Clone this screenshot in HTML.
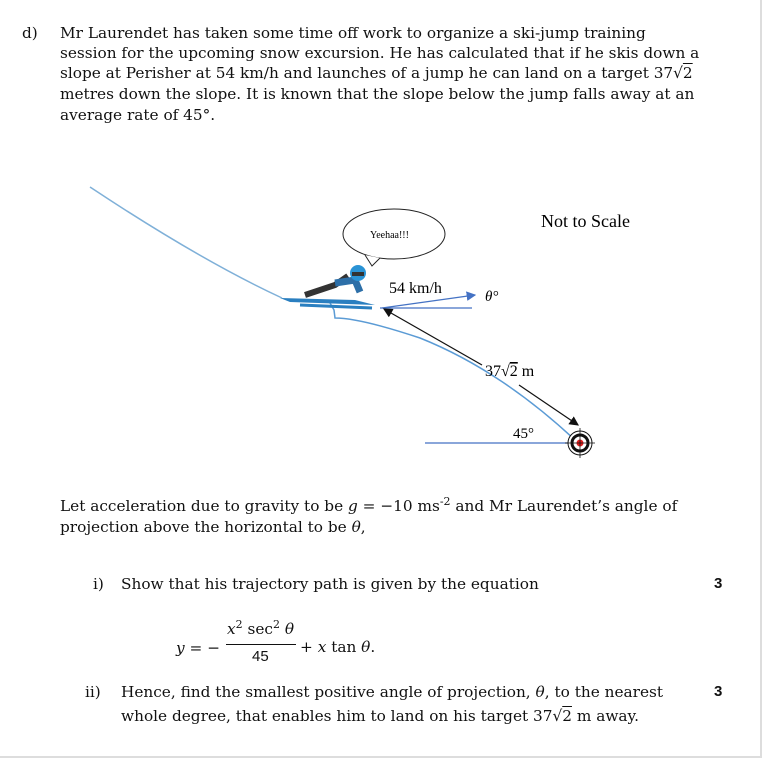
<!DOCTYPE html>
<html><head><meta charset="utf-8"><style>
body{margin:0;width:762px;height:758px;background:#fff;position:relative;overflow:hidden;font-family:"DejaVu Serif",serif;color:#111}
.t{position:absolute;white-space:nowrap;font-size:15.3px;line-height:20px;font-family:"DejaVu Serif",serif}
.m{font-style:italic}
sup{line-height:0}
.b{position:absolute;font-family:"Liberation Sans",sans-serif;font-weight:bold;font-size:15px}
</style></head><body>
<div style="position:absolute;right:0;top:0;width:2px;height:758px;background:#ddd"></div>
<div style="position:absolute;left:0;bottom:0;width:762px;height:2px;background:#ddd"></div>
<div class="t" style="left:22px;top:23px">d)</div>
<div class="t" style="left:60px;top:23px">Mr Laurendet has taken some time off work to organize a ski-jump training</div>
<div class="t" style="left:60px;top:43px">session for the upcoming snow excursion. He has calculated that if he skis down a</div>
<div class="t" style="left:60px;top:63px">slope at Perisher at 54 km/h and launches of a jump he can land on a target 37√<span style="text-decoration:overline">2</span></div>
<div class="t" style="left:60px;top:84px">metres down the slope. It is known that the slope below the jump falls away at an</div>
<div class="t" style="left:60px;top:105px">average rate of 45°.</div>

<svg style="position:absolute;left:0;top:0" width="762" height="470">
<defs><marker id="ab" markerWidth="8" markerHeight="8" refX="7" refY="4" orient="auto"><path d="M0,0L8,4L0,8z" fill="#111"/></marker>
<marker id="au" markerWidth="8" markerHeight="8" refX="7" refY="4" orient="auto"><path d="M0,0L8,4L0,8z" fill="#4472c4"/></marker></defs>
<path d="M90,187 Q200,260 282,298" stroke="#7fb0d8" stroke-width="1.5" fill="none"/>
<path d="M330,303 L334,310 L335,318 Q360,318 420,338 Q500,370 575,440" stroke="#5b9bd5" stroke-width="1.5" fill="none"/>
<path d="M280,298 L355,300 L375,305 L290,302z" fill="#2a7fc0"/>
<path d="M300,305 L372,308" stroke="#2a7fc0" stroke-width="3"/>
<path d="M305,295 L335,285 L348,276" stroke="#333" stroke-width="6" fill="none"/>
<path d="M335,283 L355,280 L360,292" stroke="#2d6fa8" stroke-width="7" fill="none"/>
<circle cx="358" cy="273" r="8" fill="#2a93d5"/>
<rect x="352" y="272" width="12" height="4" fill="#333"/>
<ellipse cx="394" cy="234" rx="51" ry="25" fill="#fff" stroke="#222"/>
<path d="M365,255 L372,266 L380,258" fill="#fff" stroke="#222"/>
<text x="370" y="238" font-size="10" font-family="Liberation Serif">Yeehaa!!!</text>
<text x="541" y="227" font-size="18" font-family="Liberation Serif">Not to Scale</text>
<text x="389" y="293" font-size="16" font-family="Liberation Serif">54 km/h</text>
<line x1="380" y1="308" x2="472" y2="308" stroke="#4472c4" stroke-width="1.2"/>
<line x1="382" y1="308" x2="475" y2="295" stroke="#4472c4" stroke-width="1.2" marker-end="url(#au)"/>
<text x="485" y="301" font-size="15" font-style="italic" font-family="Liberation Serif">θ°</text>
<line x1="482" y1="365" x2="384" y2="309" stroke="#111" stroke-width="1.2" marker-end="url(#ab)"/>
<line x1="519" y1="385" x2="578" y2="425" stroke="#111" stroke-width="1.2" marker-end="url(#ab)"/>
<text x="485" y="376" font-size="16" font-family="Liberation Serif">37√<tspan text-decoration="overline">2</tspan> m</text>
<text x="513" y="438" font-size="15" font-family="Liberation Serif">45°</text>
<line x1="425" y1="443" x2="575" y2="443" stroke="#4472c4" stroke-width="1.2"/>
<circle cx="580" cy="443" r="12" fill="#fff" stroke="#111" stroke-width="1"/>
<circle cx="580" cy="443" r="8" fill="none" stroke="#111" stroke-width="3"/>
<circle cx="580" cy="443" r="3.5" fill="#e02020"/>
<line x1="565" y1="443" x2="595" y2="443" stroke="#111" stroke-width="0.8"/>
<line x1="580" y1="428" x2="580" y2="458" stroke="#111" stroke-width="0.8"/>
</svg>

<div class="t" style="left:60px;top:496px">Let acceleration due to gravity to be <span class="m">g</span> = −10 ms<sup style="font-size:11px">-2</sup> and Mr Laurendet’s angle of</div>
<div class="t" style="left:60px;top:517px">projection above the horizontal to be <span class="m">θ</span>,</div>
<div class="t" style="left:93px;top:574px">i)</div>
<div class="t" style="left:121px;top:574px">Show that his trajectory path is given by the equation</div>
<div class="b" style="left:714px;top:575px">3</div>
<div class="t" style="left:176px;top:638px"><span class="m">y</span> = −</div>
<div class="t" style="left:227px;top:619px"><span class="m">x</span><sup style="font-size:11px">2</sup> sec<sup style="font-size:11px">2</sup> <span class="m">θ</span></div>
<div style="position:absolute;left:226px;top:644px;width:70px;height:1px;background:#111"></div>
<div class="t" style="left:252px;top:647px;font-family:'Liberation Sans',sans-serif;font-size:15px">45</div>
<div class="t" style="left:300px;top:637px">+ <span class="m">x</span> tan <span class="m">θ</span>.</div>
<div class="t" style="left:85px;top:682px">ii)</div>
<div class="t" style="left:121px;top:682px">Hence, find the smallest positive angle of projection, <span class="m">θ</span>, to the nearest</div>
<div class="b" style="left:714px;top:683px">3</div>
<div class="t" style="left:121px;top:706px">whole degree, that enables him to land on his target 37√<span style="text-decoration:overline">2</span> m away.</div>
</body></html>
